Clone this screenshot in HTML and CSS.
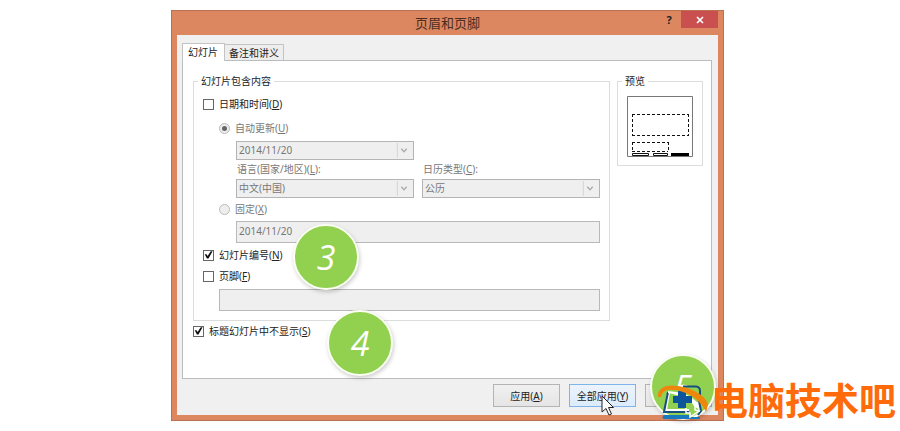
FILE: index.html
```html
<!DOCTYPE html>
<html lang="zh-CN">
<head>
<meta charset="utf-8">
<title>页眉和页脚</title>
<link rel="stylesheet" href="styles.css">
</head>
<body>
<main class="stage">
  <section class="dialog" aria-labelledby="dialog-title">
    <header class="titlebar">
      <h1 id="dialog-title">页眉和页脚</h1>
      <div class="window-buttons">
        <button class="help" type="button" aria-label="帮助">?</button>
        <button class="close" type="button" aria-label="关闭">
          <svg width="8" height="8" viewBox="0 0 8 8"><path d="M1 1l6 6M7 1L1 7" stroke="#fff" stroke-width="1.7"/></svg>
        </button>
      </div>
    </header>
    <form class="client">
      <div class="tabs" role="tablist">
        <button class="tab active" type="button" role="tab" aria-selected="true">幻灯片</button>
        <button class="tab" type="button" role="tab" aria-selected="false">备注和讲义</button>
      </div>
      <div class="panel" role="tabpanel">
        <div class="columns">
          <fieldset class="group content">
            <legend>幻灯片包含内容</legend>
            <label class="option"><input type="checkbox"><span>日期和时间(<u>D</u>)</span></label>
            <div class="date-options">
              <label class="option"><input type="radio" name="date" checked disabled><span>自动更新(<u>U</u>)</span></label>
              <div class="date-fields">
                <div class="combo half">
                  <select aria-label="日期格式" disabled><option>2014/11/20</option></select>
                  <svg class="arrow" viewBox="0 0 16 17"><path d="M.5 0v17" stroke="#d2d2d2"/><path d="M5 6.500l3 3.500 3-3.500" fill="none" stroke="#a8a8a8" stroke-width="1.500"/></svg>
                </div>
                <div class="pair">
                  <div class="field">
                    <label for="lang">语言(国家/地区)(<u>L</u>):</label>
                    <div class="combo">
                      <select id="lang" disabled><option>中文(中国)</option></select>
                      <svg class="arrow" viewBox="0 0 16 17"><path d="M.5 0v17" stroke="#d2d2d2"/><path d="M5 6.500l3 3.500 3-3.500" fill="none" stroke="#a8a8a8" stroke-width="1.500"/></svg>
                    </div>
                  </div>
                  <div class="field">
                    <label for="calendar">日历类型(<u>C</u>):</label>
                    <div class="combo">
                      <select id="calendar" disabled><option>公历</option></select>
                      <svg class="arrow" viewBox="0 0 16 17"><path d="M.5 0v17" stroke="#d2d2d2"/><path d="M5 6.500l3 3.500 3-3.500" fill="none" stroke="#a8a8a8" stroke-width="1.500"/></svg>
                    </div>
                  </div>
                </div>
              </div>
              <label class="option fixed"><input type="radio" name="date" disabled><span>固定(<u>X</u>)</span></label>
              <div class="date-fields tight"><input class="text" type="text" value="2014/11/20" aria-label="固定日期" disabled></div>
            </div>
            <label class="option number"><input type="checkbox" checked><span>幻灯片编号(<u>N</u>)</span></label>
            <label class="option footer-option"><input type="checkbox"><span>页脚(<u>F</u>)</span></label>
            <div class="footer-field"><input class="text" type="text" aria-label="页脚" disabled></div>
          </fieldset>
          <fieldset class="group preview">
            <legend>预览</legend>
            <svg viewBox="0 0 66 61" width="66" height="61" role="img" aria-label="幻灯片预览">
              <path d="M.5.5h65v60H.5z" fill="#fff" stroke="#777"/>
              <g fill="none" stroke="#111">
                <path d="M5 18.500h57M5 39.500h57M5.500 18v22M61.500 18v22M5 46.500h36M5 55.500h36M5.500 46v10M41.500 46v10" stroke-dasharray="3 2"/>
                <path d="M5.500 57.500h16v2h-16zM26.500 57.500h14v2h-14z"/>
              </g>
              <path d="M44 57h18v3H44z"/>
            </svg>
          </fieldset>
        </div>
        <label class="option title-slide"><input type="checkbox" checked><span>标题幻灯片中不显示(<u>S</u>)</span></label>
      </div>
      <footer class="actions">
        <button type="button">应用(<u>A</u>)</button>
        <button class="hot" type="button">全部应用(<u>Y</u>)</button>
        <button type="button" aria-label="取消"></button>
      </footer>
    </form>
    <span class="step step-3">3</span>
    <span class="step step-4">4</span>
    <span class="step step-5">5</span>
    <svg class="cursor" width="13" height="21" viewBox="0 0 13 21"><path d="M1 1v16l4-3.500 3 6.500 2.500-1-3-6.500h5z" fill="#fff" stroke="#222"/></svg>
    <div class="brand">
      <svg width="53" height="42" viewBox="0 0 53 42" aria-hidden="true">
        <path d="M10 10L6 31H40L42 12Q42 6 38 6H27z" fill="#92d050"/>
        <path d="M11 11L8 29H31M40 21l2 12-6 3" fill="none" stroke="#fff" stroke-width="2"/>
        <path d="M10 11L6 31H31M25 5.500H38Q42 6 42 10V15M41 20L43 30 40 34" fill="none" stroke="#164f80" stroke-width="2"/>
        <path d="M6 34H31L33 36H42V38H6Q3 37 6 34z" fill="#1879bd"/>
        <path d="M10 10Q30 11 40 22V28L36 25Q31 16 10 12z" fill="#fff"/>
        <path d="M20 10h8v5h6v7h-6v5h-8v-5h-5v-7h5z" fill="#0b559b"/>
        <path d="M28 27v5h4v4l9-6-4-1v-7" fill="none" stroke="#fff" stroke-width="1.500"/>
        <path d="M0 16C-1 6 9 3 20 5C34 7 49 15 50 24L48 31C43 20 34 14 25 11C15 8 5 7 3 16z" fill="#ef860c"/>
      </svg>
      <strong>电脑技术吧</strong>
    </div>
  </section>
</main>
</body>
</html>
```
FILE: styles.css
```css
* {
  box-sizing: border-box;
}

body {
  margin: 0;
  background: #fff;
  color: #222;
  font: 10px/14px "Noto Sans", "Noto Sans CJK SC", sans-serif;
}

button, input, select {
  margin: 0;
  color: inherit;
  font: inherit;
}

u {
  text-underline-offset: 1px;
}

.stage {
  padding: 10px 5px 9px 0;
}

.dialog {
  position: relative;
  max-width: 553px;
  margin: 0 auto;
  padding: 0 5px 5px;
  border: 1px solid #b87152;
  background: #dc8760;
}

.titlebar {
  display: grid;
  grid-template-columns: 1fr auto 1fr;
  height: 24px;
}

.titlebar h1 {
  grid-column: 2;
  align-self: center;
  margin: 0;
  color: #4a2d20;
  font-size: 13px;
  font-weight: 400;
  line-height: 20px;
}

.window-buttons {
  display: flex;
  justify-content: flex-end;
  align-items: flex-start;
}

.window-buttons button {
  display: grid;
  place-items: center;
  height: 17px;
  padding: 0;
  border: 0;
}

.help {
  width: 24px;
  background: transparent;
  color: #222;
  font-size: 11px;
  font-weight: 700;
}

.window-buttons .close {
  width: 37px;
  background: #c9504f;
}

.client {
  padding: 8px 6px 8px 5px;
  background: #f0f0f0;
}

.tabs {
  display: flex;
  align-items: flex-end;
}

.tab {
  height: 16px;
  padding: 0 4px;
  border: 1px solid #c3c3c3;
  border-width: 1px 1px 0 0;
  background: #eee;
  line-height: 14px;
}

.tab.active {
  position: relative;
  height: 18px;
  margin-bottom: -1px;
  padding: 0 6px 1px 5px;
  border-left-width: 1px;
  background: #fff;
}

.panel {
  padding: 13px 8px 40px 10px;
  border: 1px solid #b9bdbd;
  background: #fff;
}

.columns {
  display: flex;
  align-items: flex-start;
  gap: 7px;
}

.group {
  min-width: 0;
  margin: 0;
  border: 1px solid #dcdcdc;
}

.group legend {
  padding: 0 3px;
}

.content {
  flex: 1;
  padding: 9px 9px 9px 4px;
}

.content > .option {
  padding-left: 5px;
}

.preview {
  flex: 0 0 86px;
  padding: 8px 9px;
}

.group.preview legend {
  margin-left: -5px;
}

.preview svg {
  display: block;
}

.option {
  display: flex;
  align-items: center;
  gap: 5px;
}

.option input {
  display: grid;
  place-items: center;
  width: 11px;
  height: 11px;
  appearance: none;
  border: 1px solid #666;
  background: #fff;
}

.option input[type="checkbox"]:checked::before {
  content: "";
  width: 9px;
  height: 9px;
  background: #111;
  clip-path: polygon(8% 42%, 28% 42%, 40% 62%, 75% 8%, 95% 8%, 50% 90%, 32% 90%);
}

.option input[type="radio"] {
  border-color: #bbb;
  border-radius: 50%;
  background: #eee;
}

.option input[type="radio"]:checked::before {
  content: "";
  width: 5px;
  height: 5px;
  border-radius: 50%;
  background: #666;
}

.date-options {
  margin-top: 10px;
  padding-left: 21px;
  color: #777;
}

.date-fields {
  padding: 6px 0 0 17px;
}

.date-fields.tight {
  padding-top: 5px;
}

.combo {
  display: grid;
  grid-template-columns: 1fr 16px;
  height: 19px;
  padding: 1px;
  border: 1px solid #b4b4b4;
  background: #efefef;
}

.combo select {
  grid-area: 1 / 1 / 2 / 3;
  min-width: 0;
  padding: 0 18px 2px 1px;
  appearance: none;
  border: 0;
  background: transparent;
  opacity: 1;
}

.arrow {
  grid-area: 1 / 2;
  width: 16px;
  height: 15px;
  pointer-events: none;
}

.half {
  width: calc(50% - 4px);
}

.pair {
  display: grid;
  grid-template-columns: 1fr 1fr;
  gap: 8px;
  margin-top: 2px;
}

.field {
  display: grid;
  gap: 3px;
}

.field label {
  padding-left: 1px;
}

.fixed {
  margin-top: 4px;
}

.text {
  display: block;
  width: 100%;
  height: 22px;
  padding: 0 2px 2px;
  border: 1px solid #b9b9b9;
  background: #efefef;
}

.number {
  margin-top: 5px;
}

.footer-option {
  margin-top: 7px;
}

.footer-field {
  padding: 6px 0 0 21px;
}

.title-slide {
  margin-top: 3px;
}

.actions {
  display: flex;
  justify-content: flex-end;
  gap: 9px;
  padding-top: 5px;
}

.actions button {
  width: 67px;
  height: 23px;
  padding: 0;
  border: 1px solid #b4b4b4;
  background: linear-gradient(#f0f0f0, #e5e5e5);
}

.actions .hot {
  border-color: #7eb4ea;
  background: linear-gradient(#ecf4fc, #dcecfc);
}

.step {
  position: absolute;
  display: grid;
  place-items: center;
  width: 66px;
  height: 66px;
  border: 2px solid #fafff2;
  border-radius: 50%;
  background: #92d050;
  box-shadow: 1px 2px 4px #0003;
  color: #fff;
  font: italic 400 34px/40px "Open Sans", sans-serif;
}

.step-3 {
  left: 121px;
  top: 213px;
}

.step-4 {
  left: 155px;
  top: 299px;
}

.step-5 {
  left: 478px;
  top: 343px;
}

.cursor {
  position: absolute;
  left: 429px;
  top: 384px;
}

.brand {
  position: absolute;
  left: 486px;
  top: 370px;
  display: flex;
  align-items: flex-start;
  color: #ff6b0a;
  white-space: nowrap;
}

.brand strong {
  font: 700 37px/36px "Noto Sans CJK SC", sans-serif;
}
```
